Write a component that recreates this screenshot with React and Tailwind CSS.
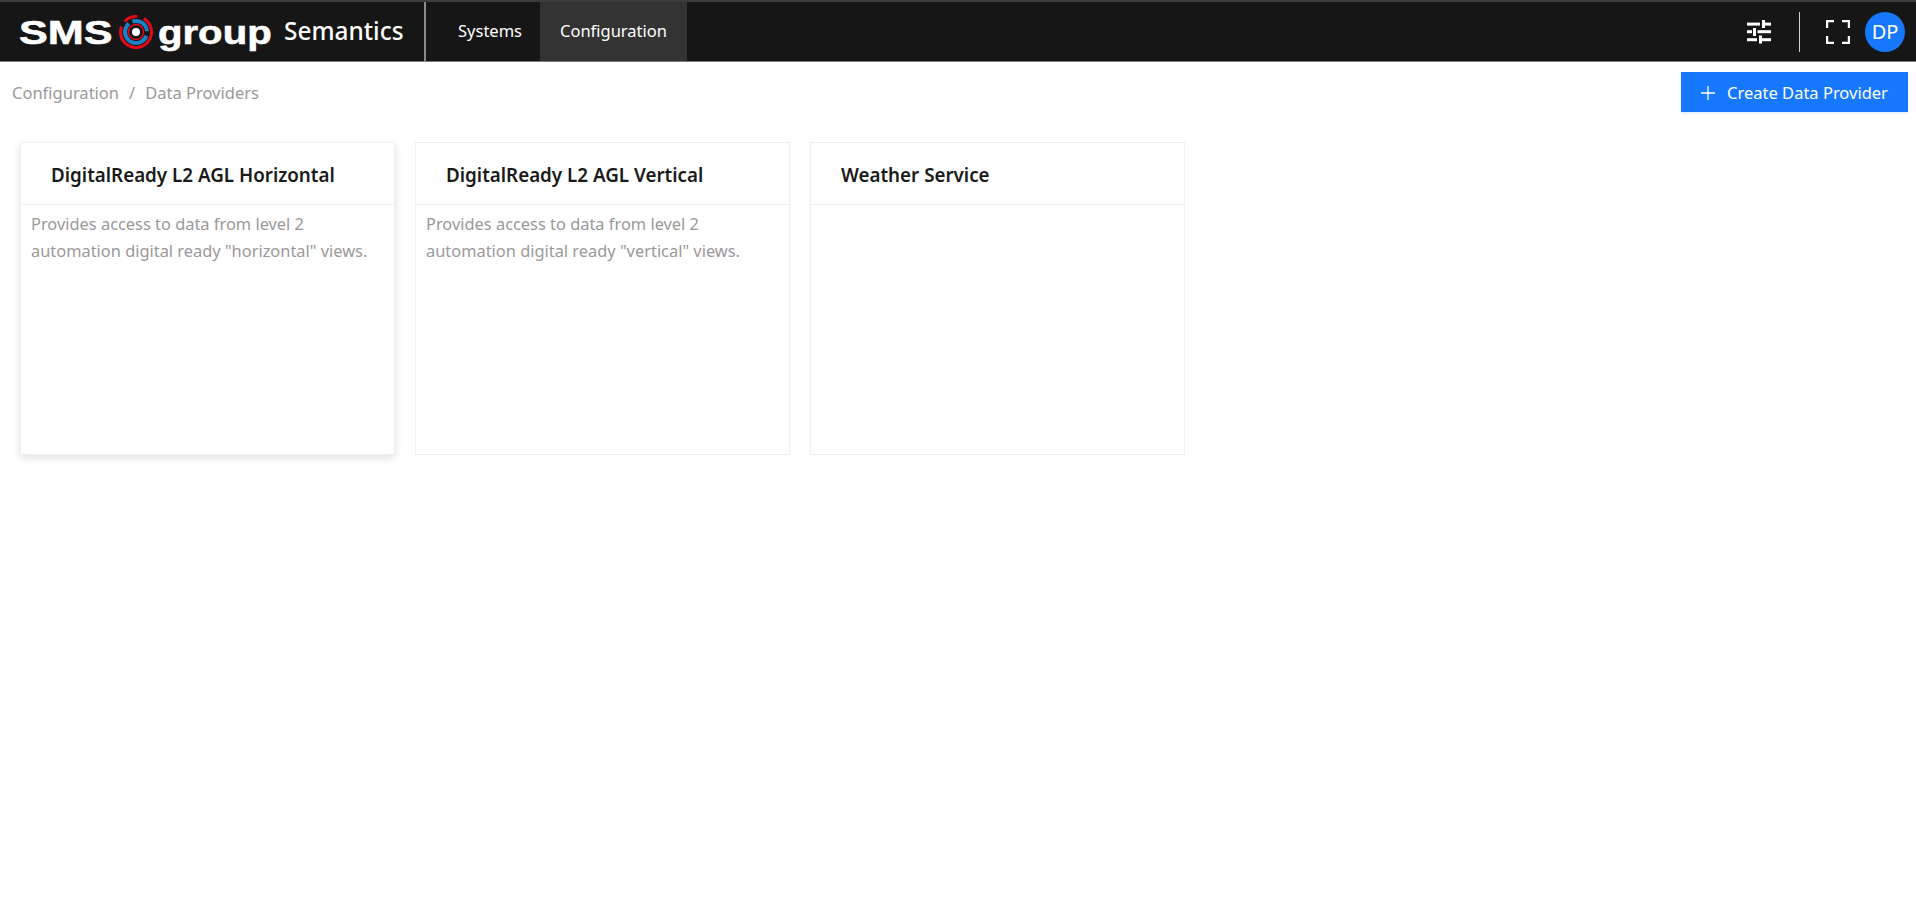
import React from "react";

const FONT = "font-['Noto_Sans','Open_Sans',sans-serif]";

const providers = [
  {
    name: "DigitalReady L2 AGL Horizontal",
    description: 'Provides access to data from level 2 automation digital ready "horizontal" views.',
    hovered: true,
  },
  {
    name: "DigitalReady L2 AGL Vertical",
    description: 'Provides access to data from level 2 automation digital ready "vertical" views.',
  },
  { name: "Weather Service", description: "" },
];

const LogoMark = () => (
  <svg width="36" height="36" viewBox="0 0 36 36" fill="none" className="shrink-0">
    <circle cx="18" cy="18" r="15.5" stroke="#e30a17" strokeWidth="3" strokeDasharray="70 6 14 7.4" transform="rotate(-60 18 18)" />
    <circle cx="18" cy="18" r="11" stroke="#1d7fc4" strokeWidth="4" strokeDasharray="40 4 20 5" transform="rotate(20 18 18)" />
    <circle cx="18" cy="18" r="7.5" stroke="#e30a17" strokeWidth="1.5" />
    <circle cx="18" cy="18" r="5.5" fill="#161616" />
    <circle cx="18" cy="18" r="4" fill="#ffffff" />
  </svg>
);

const SlidersIcon = () => (
  <svg width="24" height="24" viewBox="0 0 24 24" fill="#ffffff" className="shrink-0">
    <rect x="0" y="2.6" width="13" height="3" />
    <rect x="15" y="0" width="3" height="8" />
    <rect x="15" y="2.6" width="9" height="3" />
    <rect x="0" y="10.2" width="5" height="3" />
    <rect x="6" y="8" width="3" height="8" />
    <rect x="10.5" y="10.2" width="13.5" height="3" />
    <rect x="0" y="18.2" width="10" height="3" />
    <rect x="12" y="15.5" width="3" height="8" />
    <rect x="14" y="18.2" width="10" height="3" />
  </svg>
);

const FullscreenIcon = () => (
  <svg width="24" height="24" viewBox="0 0 24 24" fill="none" stroke="#ffffff" strokeWidth="2.2" className="shrink-0">
    <path d="M1.1 8V1.1H8M16 1.1h6.9V8M22.9 16v6.9H16M8 22.9H1.1V16" />
  </svg>
);

const Header = () => (
  <header className="flex h-[62px] items-stretch border-t-2 border-b border-t-[#3c3c3c] border-b-[#7a7a7a] bg-[#161616] text-white">
    <div className="flex w-[426px] items-center border-r-2 border-[#8a8a8a] pl-[19px]">
      <span className="w-[93px] origin-left scale-x-[1.27] font-['Liberation_Sans',sans-serif] text-[34px] leading-none font-bold [-webkit-text-stroke:0.6px_white]">SMS</span>
      <span className="ml-[6px]"><LogoMark /></span>
      <span className="ml-[4px] w-[114px] origin-left scale-x-[1.18] font-['Liberation_Sans',sans-serif] text-[34px] leading-none font-bold [-webkit-text-stroke:0.6px_white]">group</span>
      <span className="ml-[12px] text-[24.4px] font-medium">Semantics</span>
    </div>
    <nav className="ml-[16px] flex items-stretch text-[16.5px]">
      <a className="flex items-center pr-[18px] pl-4">Systems</a>
      <a className="flex items-center bg-[#333333] px-5">Configuration</a>
    </nav>
    <div className="ml-auto flex items-center pr-[11px]">
      <SlidersIcon />
      <div className="mr-[26px] ml-[28px] h-10 w-px bg-[#cfcfcf]" />
      <FullscreenIcon />
      <div className="ml-[15px] flex size-10 items-center justify-center rounded-full bg-[#1677ff] text-[20px]">DP</div>
    </div>
  </header>
);

const ProviderCard = ({ name, description, hovered }) => (
  <div className={`h-[313px] w-[375px] border border-[#f0f0f0] bg-white ${hovered ? "shadow-[0_3px_8px_rgba(0,0,0,0.12)]" : ""}`}>
    <div className="flex h-[62px] items-center border-b border-[#f0f0f0] pt-[3px] pl-[30px] text-[18.8px] font-semibold text-[#1a1a1a]">
      {name}
    </div>
    <p className="px-[10px] pt-[5px] text-[16.4px] leading-[27px] text-[#999999]">{description}</p>
  </div>
);

export default function App() {
  return (
    <div className={`min-h-[910px] bg-white ${FONT}`}>
      <Header />
      <div className="flex h-[49px] items-center justify-between pt-[10px] pr-2 pl-3">
        <div className="flex items-center gap-[10px] pt-[4px] text-[16.5px] text-[#999999]">
          <span>Configuration</span>
          <span>/</span>
          <span>Data Providers</span>
        </div>
        <button className="flex h-10 w-[227px] items-center justify-center gap-3 bg-[#1677ff] pt-[3px] text-[16.5px] text-white shadow-[0_2px_0_rgba(5,145,255,0.1)]">
          <svg width="14" height="14" viewBox="0 0 14 14" stroke="#ffffff" strokeWidth="1.3">
            <path d="M7 0v14M0 7h14" />
          </svg>
          Create Data Provider
        </button>
      </div>
      <div className="flex gap-5 pt-[31px] pl-5">
        {providers.map((p) => (
          <ProviderCard key={p.name} {...p} />
        ))}
      </div>
    </div>
  );
}
